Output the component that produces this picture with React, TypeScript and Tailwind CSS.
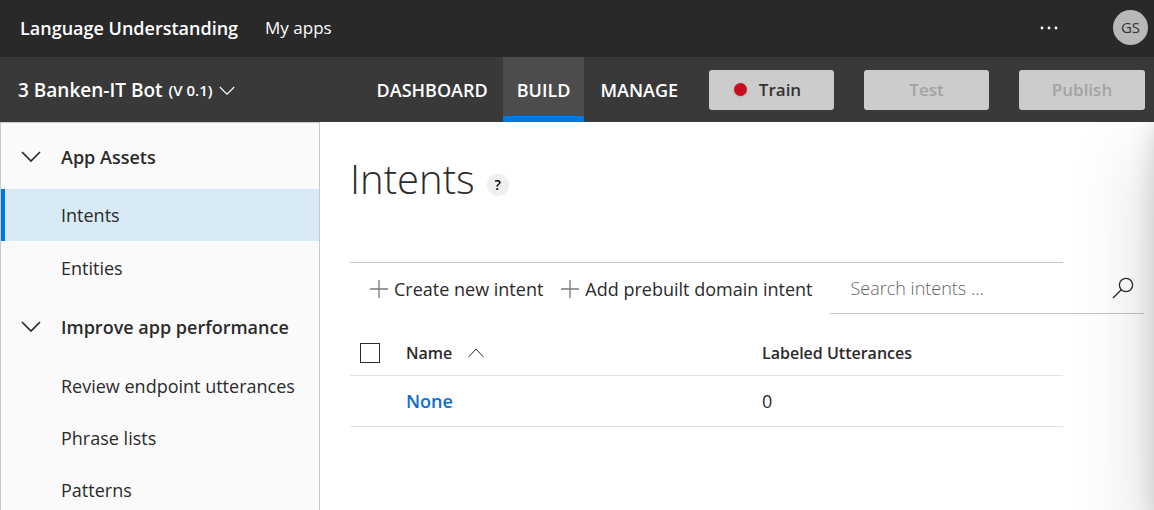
import React from "react";

type IconProps = { className?: string };

function ChevronDown({ className }: IconProps) {
  return (
    <svg viewBox="0 0 20 12" fill="none" stroke="currentColor" className={className} aria-hidden="true">
      <path d="M1 1l9 9 9-9" />
    </svg>
  );
}

function ChevronUp({ className }: IconProps) {
  return (
    <svg viewBox="0 0 16 10" fill="none" stroke="currentColor" className={className} aria-hidden="true">
      <path d="M0.5 9L8 1l7.500 8" />
    </svg>
  );
}

function Plus({ className }: IconProps) {
  return (
    <svg viewBox="0 0 18 18" fill="none" stroke="currentColor" strokeWidth="1.3" className={className} aria-hidden="true">
      <path d="M9 0v18M0 9h18" />
    </svg>
  );
}

function Search({ className }: IconProps) {
  return (
    <svg viewBox="0 0 22 22" fill="none" stroke="currentColor" strokeWidth="1.3" className={className} aria-hidden="true">
      <circle cx="14" cy="8" r="6.600" />
      <path d="M9.300 12.700L1 21" />
    </svg>
  );
}

const sections = [
  { title: "App Assets", items: ["Intents", "Entities"] },
  { title: "Improve app performance", items: ["Review endpoint utterances", "Phrase lists", "Patterns"] },
];

const intents = [{ name: "None", utterances: 0 }];

function TopBar() {
  return (
    <header className="flex h-[57px] shrink-0 items-center bg-[#292929] pr-1.5 pb-0.5 pl-5 text-white">
      <a href="#home" className="text-lg font-semibold">Language Understanding</a>
      <a href="#apps" className="ml-[27px] text-[17px]">My apps</a>
      <button type="button" aria-label="More" className="mr-[55px] ml-auto">
        <svg viewBox="0 0 18 4" fill="currentColor" className="h-1 w-[18px]">
          <circle cx="2" cy="2" r="1.400" />
          <circle cx="9" cy="2" r="1.400" />
          <circle cx="16" cy="2" r="1.400" />
        </svg>
      </button>
      <button type="button" className="size-[35px] rounded-full bg-[#b8b8b8] text-[15px] text-[#333]">GS</button>
    </header>
  );
}

function AppBar() {
  return (
    <div className="flex h-[65px] shrink-0 items-center bg-[#393939] pr-[9px] pl-[18px] text-white">
      <button type="button" className="flex items-center pt-0.5 font-semibold">
        <span className="text-[19px]">3 Banken-IT Bot</span>
        <span className="ml-1.5 text-[15px]">(V 0.1)</span>
        <ChevronDown className="ml-1.5 h-[10px] w-4 stroke-[1.4]" />
      </button>
      <nav className="ml-auto flex self-stretch text-lg font-semibold">
        <a href="#dashboard" className="flex items-center px-[15px]">DASHBOARD</a>
        <a href="#build" aria-current="page" className="flex items-center border-b-6 border-[#0078d7] bg-[#4c4c4c] px-[14px] pt-1.5">BUILD</a>
        <a href="#manage" className="flex items-center px-4">MANAGE</a>
      </nav>
      <div className="ml-[15px] flex gap-[30px] text-[17px] font-semibold">
        <button type="button" className="flex h-10 w-[125px] items-center justify-center gap-3 rounded-[3px] bg-[#ccc] pr-2 text-[#333]">
          <span className="size-[13px] rounded-full bg-[#c50f1f] shadow-sm" />
          Train
        </button>
        <button type="button" disabled className="h-10 w-[125px] rounded-[3px] bg-[#ccc] text-[#a3a3a3]">Test</button>
        <button type="button" disabled className="h-10 w-[126px] rounded-[3px] bg-[#ccc] text-[#a3a3a3]">Publish</button>
      </div>
    </div>
  );
}

function Sidebar() {
  return (
    <nav className="w-80 shrink-0 border-x border-t border-[#c8c8c8] bg-[#fafafa] text-lg text-[#2b2b2b]">
      {sections.map((section) => (
        <section key={section.title}>
          <h2>
            <button type="button" aria-expanded="true" className="flex h-[66px] w-full items-center pt-0.5 pl-5 font-semibold">
              <ChevronDown className="mr-5 h-3 w-5 stroke-[1.7]" />
              {section.title}
            </button>
          </h2>
          <ul>
            {section.items.map((item) => (
              <li key={item}>
                <a
                  href="#item"
                  className={
                    item === "Intents"
                      ? "flex h-[52px] items-center border-l-4 border-[#0078d7] bg-[#d7eaf5] pl-14"
                      : "flex h-[52px] items-center pt-0.5 pl-[60px]"
                  }
                >
                  {item}
                </a>
              </li>
            ))}
          </ul>
        </section>
      ))}
    </nav>
  );
}

function IntentsPage() {
  return (
    <main className="min-w-0 flex-1 bg-white pr-2.5 pl-[30px] text-[#2b2b2b]">
      <div className="flex h-[140px] items-start pt-7">
        <h1 className="text-[40px] leading-[58px] font-light">Intents</h1>
        <button type="button" aria-label="Help" className="mt-6 ml-3 size-[22px] rounded-full bg-[#f0f0f0] text-sm font-semibold text-black">?</button>
      </div>
      <div className="mr-[81px] border-t border-[#c4c4c4]" />
      <div className="flex h-[51px] items-stretch text-lg">
        <button type="button" className="ml-5 flex items-center gap-1.5">
          <Plus className="size-[18px] text-[#777]" />
          Create new intent
        </button>
        <button type="button" className="ml-[18px] flex items-center gap-1.5">
          <Plus className="size-[18px] text-[#777]" />
          Add prebuilt domain intent
        </button>
        <label className="ml-[18px] flex min-w-0 flex-1 items-center border-b border-[#c4c4c4] pr-2.5 pl-5">
          <input type="text" aria-label="Search intents" placeholder="Search intents ..." className="min-w-0 flex-1 bg-transparent font-light outline-none placeholder:text-[#666]" />
          <Search className="size-[22px]" />
        </label>
      </div>
      <div className="pr-[81px]">
        <table className="w-full table-fixed text-left">
          <thead>
            <tr className="h-[61px] border-b border-[#e1e1e1] text-base">
              <th className="w-14 pt-[17px] pl-2.5">
                <input type="checkbox" aria-label="Select all" className="block size-5 appearance-none border-[1.5px] border-[#2b2b2b] bg-white" />
              </th>
              <th className="pt-[17px] font-semibold">
                <button type="button" className="flex items-center gap-4">
                  Name
                  <ChevronUp className="h-2.5 w-4" />
                </button>
              </th>
              <th className="w-[301px] pt-[18px] font-semibold">Labeled Utterances</th>
            </tr>
          </thead>
          <tbody>
            {intents.map((intent) => (
              <tr key={intent.name} className="h-[51px] border-b border-[#e1e1e1] text-lg">
                <td />
                <td><a href="#none" className="font-semibold text-[#0f6cd6]">{intent.name}</a></td>
                <td>{intent.utterances}</td>
              </tr>
            ))}
          </tbody>
        </table>
      </div>
    </main>
  );
}

export default function App() {
  return (
    <div className="flex min-h-screen flex-col font-['Open_Sans',sans-serif]">
      <TopBar />
      <AppBar />
      <div className="relative flex flex-1 overflow-hidden">
        <Sidebar />
        <IntentsPage />
        <div className="pointer-events-none absolute inset-y-0 left-full w-10 shadow-[0_30px_80px_rgba(0,0,0,0.22),0_5px_24px_rgba(0,0,0,0.16)]" />
      </div>
    </div>
  );
}
